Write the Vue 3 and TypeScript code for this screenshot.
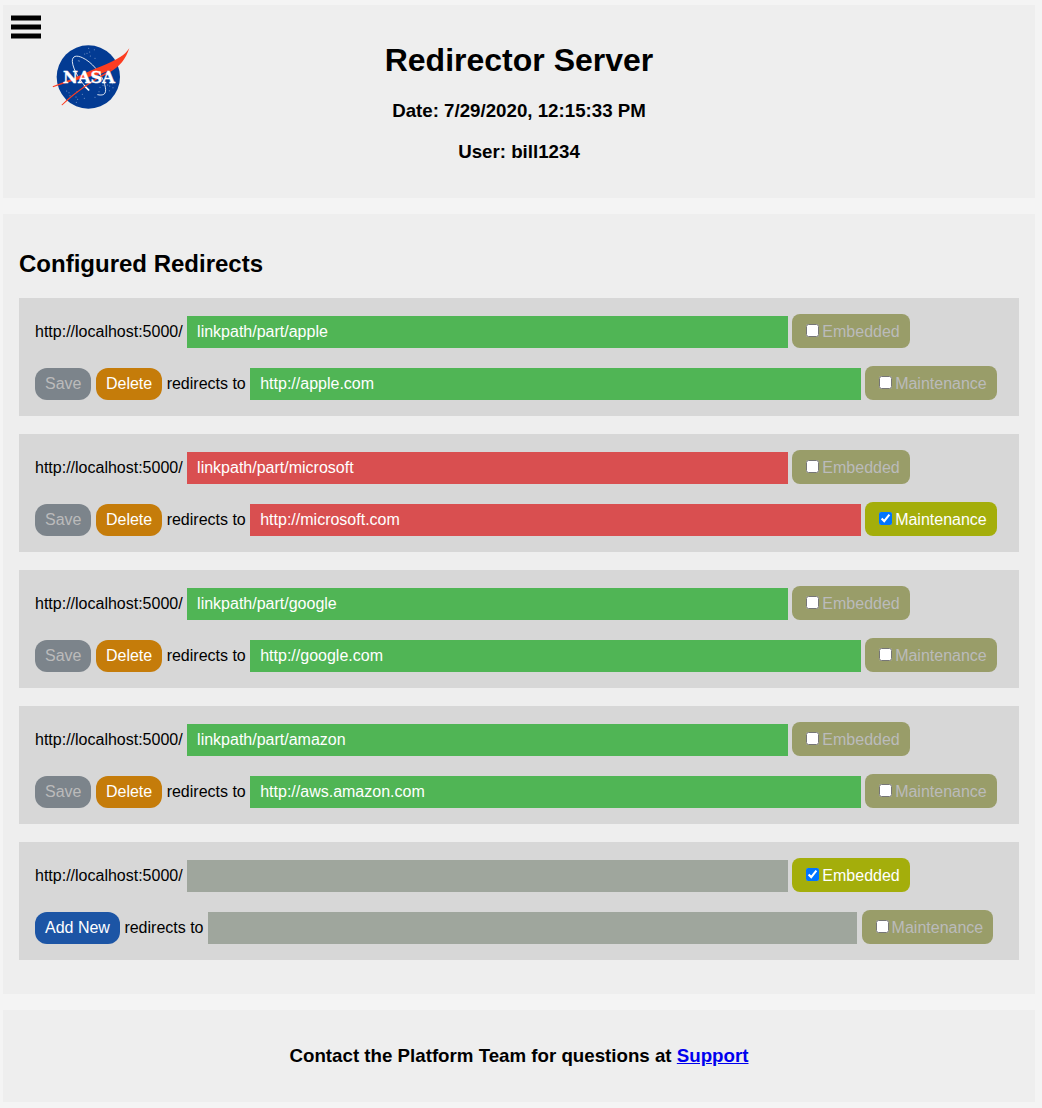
<script setup lang="ts">
import { reactive, ref } from 'vue'

interface Redirect {
  path: string
  target: string
  embedded: boolean
  maintenance: boolean
  isNew: boolean
}

const host = 'http://localhost:5000/'
const date = ref('7/29/2020, 12:15:33 PM')
const user = ref('bill1234')

const redirects = reactive<Redirect[]>([
  { path: 'linkpath/part/apple', target: 'http://apple.com', embedded: false, maintenance: false, isNew: false },
  { path: 'linkpath/part/microsoft', target: 'http://microsoft.com', embedded: false, maintenance: true, isNew: false },
  { path: 'linkpath/part/google', target: 'http://google.com', embedded: false, maintenance: false, isNew: false },
  { path: 'linkpath/part/amazon', target: 'http://aws.amazon.com', embedded: false, maintenance: false, isNew: false },
  { path: '', target: '', embedded: true, maintenance: false, isNew: true },
])

function state(r: Redirect): string {
  if (r.isNew) return 'blank'
  return r.maintenance ? 'down' : 'up'
}
</script>

<template>
  <div class="page">
    <header class="panel masthead">
      <button class="menu" type="button" aria-label="Open menu">
        <svg width="30" height="24" viewBox="0 0 30 24" aria-hidden="true">
          <path d="M0 .4h30v5.2H0zM0 9.4h30v5.2H0zM0 18.4h30v5.2H0z" />
        </svg>
      </button>
      <svg class="logo" width="95" height="80" viewBox="0 0 285 240" role="img" aria-label="NASA">
        <circle cx="130" cy="126" r="95" fill="#033b93" />
        <g fill="#8fa6d0">
          <circle v-for="([x, y], i) in [[103,78],[100,77],[126,55],[131,40],[134,51],[148,44],[150,70],[119,57],[136,63],[96,170],[72,173],[65,168],[93,186],[98,193],[75,182],[112,178],[118,190],[94,202],[150,187],[162,170],[194,153],[204,158],[193,167],[188,150],[203,146],[165,157],[174,151]]" :key="i" :cx="x" :cy="y" r="1.5" />
        </g>
        <path d="M132 166C105 140 84 103 82 80C81 62 95 60 112 68C139 80 170 115 179 148C186 173 181 184 157 179" fill="none" stroke="#fff" stroke-width="2.6" />
        <path d="M117 151L132 166" stroke="#fff" stroke-width="5" />
        <path d="M253 40C238 62 217 73 185 87C145 103 87 130 23 154L24 157C78 138 130 126 166 117C185 111 199 104 210 97C158 127 92 166 49 210L52 211C94 171 146 137 192 113C225 95 242 72 253 40Z" fill="#fc3d21" />
        <text x="132" y="143" text-anchor="middle" class="wordmark">NASA</text>
      </svg>
      <div class="titles">
        <h1>Redirector Server</h1>
        <h3>Date: {{ date }}</h3>
        <h3>User: {{ user }}</h3>
      </div>
    </header>

    <main class="panel">
      <h2>Configured Redirects</h2>
      <form v-for="(r, i) in redirects" :key="i" class="card" :class="state(r)" @submit.prevent>
        <div class="row">
          <label :for="`path-${i}`">{{ host }}</label> <input :id="`path-${i}`" v-model="r.path" class="field path" type="text" /> <label class="toggle" :class="{ on: r.embedded }"><input v-model="r.embedded" type="checkbox" />Embedded</label>
        </div>
        <div class="row">
          <button v-if="r.isNew" class="btn add" type="submit">Add New</button>
          <template v-else><button class="btn save" type="submit" disabled>Save</button> <button class="btn delete" type="button">Delete</button></template> <label :for="`target-${i}`">redirects to</label> <input :id="`target-${i}`" v-model="r.target" class="field target" type="text" /> <label class="toggle" :class="{ on: r.maintenance }"><input v-model="r.maintenance" type="checkbox" />Maintenance</label>
        </div>
      </form>
    </main>

    <footer class="panel contact">
      <h3>Contact the Platform Team for questions at <a href="#support">Support</a></h3>
    </footer>
  </div>
</template>

<style>
body {
  background: #f4f4f4;
}
</style>

<style scoped>
.page {
  display: flex;
  flex-direction: column;
  gap: 16px;
  padding: 5px 7px 6px 3px;
  font-family: "Liberation Sans", Arial, Helvetica, sans-serif;
  font-size: 16px;
  line-height: 18px;
  color: #000;
}

.panel {
  padding: 16px;
  background: #eee;
}

.masthead {
  position: relative;
  display: grid;
  grid-template-columns: 1fr auto 1fr;
  align-items: start;
}

.menu {
  position: absolute;
  top: 10px;
  left: 8px;
  padding: 0;
  border: 0;
  background: none;
  line-height: 0;
  cursor: pointer;
}

.logo {
  margin: 14px 0 0 26px;
}

.wordmark {
  font-family: "DejaVu Serif", serif;
  font-size: 49px;
  font-weight: bold;
  fill: #fff;
  stroke: #fff;
  stroke-width: 1px;
}

.titles,
.contact {
  text-align: center;
}

h1 {
  margin: 21px 0;
  font-size: 32px;
  line-height: 37px;
}

h2 {
  margin: 20px 0;
  font-size: 24px;
  line-height: 28px;
}

h3 {
  margin: 19px 0;
  line-height: 22px;
}

.card {
  padding: 16px;
  margin-bottom: 18px;
  background: #d7d7d7;
}

.row {
  white-space: nowrap;
}

.row + .row {
  margin-top: 18px;
}

.field,
.btn {
  box-sizing: content-box;
  height: 18px;
  margin: 0;
  padding: 7px 10px;
  border: 0;
  border-radius: 0;
  font: inherit;
  color: #fff;
}

.path {
  width: 60%;
}

.target {
  width: 61%;
}

.blank .target {
  width: 65%;
}

.up .field {
  background: #50b555;
}

.down .field {
  background: #d94f50;
}

.blank .field {
  background: #9fa69d;
}

.btn {
  border-radius: 12px;
}

.save {
  background: #7c848b;
  color: #bbb;
}

.delete {
  background: #c57c0a;
}

.add {
  background: #1c55a5;
}

.toggle {
  display: inline-block;
  padding: 7px 10px;
  border-radius: 8px;
  background: #999d69;
  color: #bbb;
}

.toggle.on {
  background: #a4ae0b;
  color: #fff;
}

.toggle input {
  margin: 3px 3px 3px 4px;
}
</style>
